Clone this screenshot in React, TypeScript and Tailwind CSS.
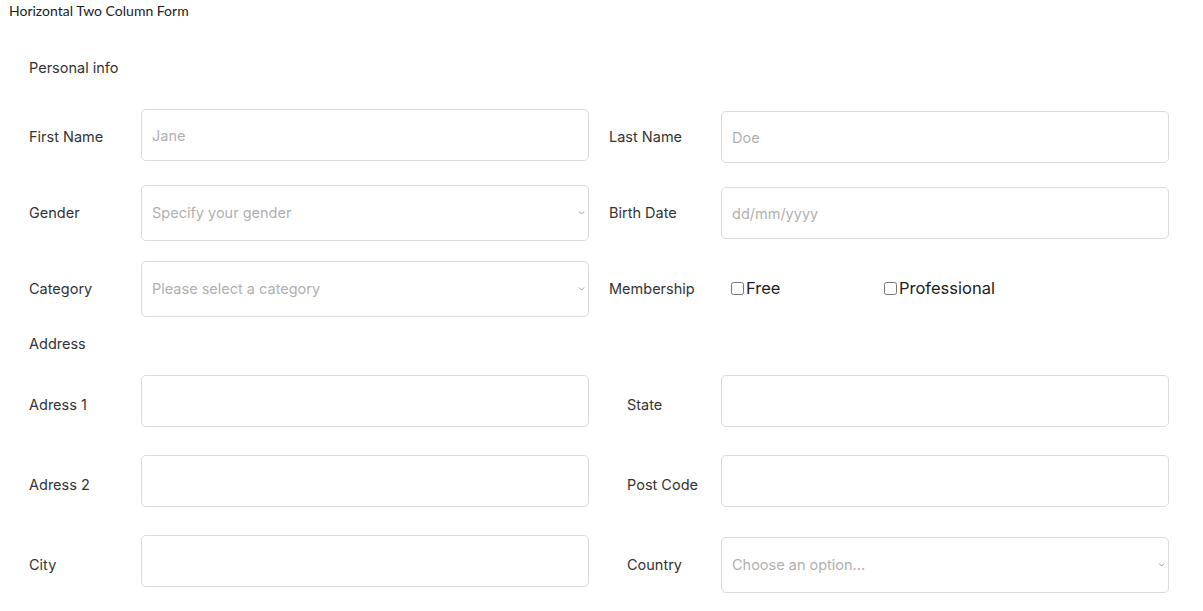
import { ChangeEvent, useState } from 'react'

const labelCls = 'w-[112px] shrink-0 text-[14.5px] leading-[20px] text-[#333]'
const inputCls =
  'w-full h-[52px] rounded-[5px] border border-[#dcdcdc] bg-white px-[10px] text-[14.5px] text-[#333] placeholder:text-[#b0b0b0] outline-none focus:border-[#b9b9ff]'

function Chevron() {
  return (
    <svg className="pointer-events-none absolute right-[4px] top-1/2 -translate-y-1/2" width="7" height="5" viewBox="0 0 7 5" fill="none">
      <path d="M1 1l2.5 2.5L6 1" stroke="#9a9a9a" strokeWidth="1" />
    </svg>
  )
}

function Select({ placeholder, options }: { placeholder: string; options: string[] }) {
  const [value, setValue] = useState('')
  return (
    <div className="relative w-full">
      <select
        value={value}
        onChange={(e: ChangeEvent<HTMLSelectElement>) => setValue(e.target.value)}
        className={`w-full h-[56px] appearance-none rounded-[5px] border border-[#dcdcdc] bg-white pl-[10px] pr-6 text-[14.5px] outline-none ${value ? 'text-[#333]' : 'text-[#b0b0b0]'}`}
      >
        <option value="">{placeholder}</option>
        {options.map((o) => (
          <option key={o} value={o} className="text-[#333]">{o}</option>
        ))}
      </select>
      <Chevron />
    </div>
  )
}

export default function App() {
  return (
    <div className="min-h-screen bg-white text-[#333]" style={{ fontFamily: 'Inter, "Noto Sans", sans-serif' }}>
      <div className="pl-[9px] pt-[2px] text-[14px] leading-[18px] text-[#222]" style={{ fontFamily: 'Lato, "Noto Sans", sans-serif' }}>
        Horizontal Two Column Form
      </div>

      <form className="pl-[29px] pr-[34px]" onSubmit={(e) => e.preventDefault()}>
        <p className="mt-[38px] text-[14.5px] leading-[20px]">Personal info</p>

        <div className="mt-[31px] grid grid-cols-[560px_1fr] gap-x-[20px]">
          {/* row 1 */}
          <div className="flex h-[76px] items-start">
            <span className={`${labelCls} mt-[18px]`}>First Name</span>
            <input className={inputCls} placeholder="Jane" />
          </div>
          <div className="flex h-[76px] items-start">
            <span className={`${labelCls} mt-[18px]`}>Last Name</span>
            <input className={`${inputCls} mt-[2px]`} placeholder="Doe" />
          </div>

          {/* row 2 */}
          <div className="flex h-[76px] items-start">
            <span className={`${labelCls} mt-[18px]`}>Gender</span>
            <Select placeholder="Specify your gender" options={['Male', 'Female', 'Other']} />
          </div>
          <div className="flex h-[76px] items-start">
            <span className={`${labelCls} mt-[18px]`}>Birth Date</span>
            <input className={`${inputCls} mt-[2px]`} placeholder="dd/mm/yyyy" />
          </div>

          {/* row 3 */}
          <div className="flex h-[56px] items-start">
            <span className={`${labelCls} mt-[18px]`}>Category</span>
            <Select placeholder="Please select a category" options={['Design', 'Development', 'Marketing']} />
          </div>
          <div className="flex h-[56px] items-start">
            <span className={`${labelCls} mt-[18px]`}>Membership</span>
            <div className="mt-[15px] flex pl-[6px] text-[16.5px] leading-[24px] text-[#222]">
              <label className="flex w-[153px] items-center">
                <input type="checkbox" className="m-0 ml-[4px] mr-[2px] h-[13px] w-[13px]" />
                Free
              </label>
              <label className="flex items-center">
                <input type="checkbox" className="m-0 ml-[4px] mr-[2px] h-[13px] w-[13px]" />
                Professional
              </label>
            </div>
          </div>
        </div>

        <p className="mt-[17px] text-[14.5px] leading-[20px]">Address</p>

        <div className="mt-[21px] grid grid-cols-[560px_1fr] gap-x-[20px]">
          <div className="flex h-[80px] items-start">
            <span className={`${labelCls} mt-[20px]`}>Adress 1</span>
            <input className={inputCls} />
          </div>
          <div className="flex h-[80px] items-start">
            <span className={`${labelCls} mt-[20px] pl-[18px]`}>State</span>
            <input className={inputCls} />
          </div>

          <div className="flex h-[80px] items-start">
            <span className={`${labelCls} mt-[20px]`}>Adress 2</span>
            <input className={inputCls} />
          </div>
          <div className="flex h-[80px] items-start">
            <span className={`${labelCls} mt-[20px] pl-[18px]`}>Post Code</span>
            <input className={inputCls} />
          </div>

          <div className="flex h-[76px] items-start">
            <span className={`${labelCls} mt-[20px]`}>City</span>
            <input className={inputCls} />
          </div>
          <div className="flex h-[76px] items-start">
            <span className={`${labelCls} mt-[20px] pl-[18px]`}>Country</span>
            <div className="mt-[2px] w-full">
              <Select placeholder="Choose an option..." options={['United States', 'United Kingdom', 'Canada']} />
            </div>
          </div>
        </div>
      </form>
    </div>
  )
}
